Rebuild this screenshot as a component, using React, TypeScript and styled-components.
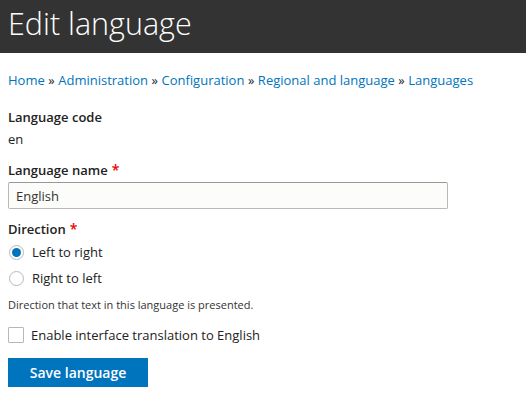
import React from "react";
import styled, { createGlobalStyle } from "styled-components";

const Global = createGlobalStyle`
  html, body { margin: 0; padding: 0; background: #fff; }
  body { font-family: "Open Sans", "Noto Sans", sans-serif; color: #222; font-size: 13px; }
`;

const Header = styled.header`
  background: #333;
  height: 53px;
  padding: 0 8px;
  display: flex;
  align-items: center;
`;

const Title = styled.h1`
  margin: 0;
  font-family: "Open Sans", sans-serif;
  font-weight: 300;
  font-size: 30.5px;
  line-height: 1;
  color: #fff;
  margin-top: -6px;
`;

const Main = styled.main`
  padding: 17px 8px 0;
  display: flex;
  flex-direction: column;
`;

const Breadcrumb = styled.nav`
  font-size: 13px;
  line-height: 20px;
  color: #222;
  margin-bottom: 17px;
`;

const Crumb = styled.a`
  color: #0074bd;
  text-decoration: none;
`;

const Sep = styled.span`
  color: #222;
  margin: 0 3.5px;
`;

const Item = styled.div<{ $mb?: number }>`
  display: flex;
  flex-direction: column;
  margin-bottom: ${(p) => p.$mb ?? 10}px;
`;

const Label = styled.label`
  font-weight: 600;
  font-size: 13px;
  line-height: 20px;
  color: #222;
`;

const Req = styled.span`
  color: #e00;
  margin-left: 4px;
  font-weight: 600;
  font-size: 14px;
`;

const Value = styled.div`
  font-size: 13px;
  line-height: 20px;
  margin-top: 2px;
`;

const Input = styled.input`
  box-sizing: border-box;
  width: 440px;
  height: 27px;
  margin-top: 2px;
  padding: 2px 7px;
  font-family: "Open Sans", sans-serif;
  font-size: 13px;
  color: #333;
  background: #fcfcfa;
  border: 1px solid #b8b8b8;
  border-top-color: #999;
  border-radius: 2px;
  outline: none;
`;

const Option = styled.label<{ $gap?: number }>`
  display: flex;
  align-items: center;
  gap: ${(p) => p.$gap ?? 8}px;
  height: 26px;
  font-size: 13px;
  color: #222;
`;

const Radio = styled.span<{ $checked?: boolean }>`
  box-sizing: border-box;
  width: 15px;
  height: 15px;
  border-radius: 50%;
  border: 1px solid #b8b8b8;
  background: #fff;
  margin-left: 1px;
  display: flex;
  align-items: center;
  justify-content: center;
  &::after {
    content: "";
    display: ${(p) => (p.$checked ? "block" : "none")};
    width: 9px;
    height: 9px;
    border-radius: 50%;
    background: #0074bd;
  }
`;

const Box = styled.span`
  box-sizing: border-box;
  width: 16px;
  height: 16px;
  border: 1px solid #b8b8b8;
  background: #fff;
  border-radius: 1px;
`;

const Desc = styled.div`
  font-size: 11px;
  line-height: 17px;
  color: #333;
  margin-top: 5px;
`;

const Button = styled.button`
  align-self: flex-start;
  box-sizing: border-box;
  width: 140px;
  height: 29px;
  margin-top: 10px;
  border: none;
  border-radius: 0;
  background: #0074bd;
  color: #fff;
  font-family: "Open Sans", sans-serif;
  font-size: 14px;
  font-weight: 600;
`;

export default function App() {
  return (
    <>
      <Global />
      <Header>
        <Title>Edit language</Title>
      </Header>
      <Main>
        <Breadcrumb>
          <Crumb href="#">Home</Crumb>
          <Sep>»</Sep>
          <Crumb href="#">Administration</Crumb>
          <Sep>»</Sep>
          <Crumb href="#">Configuration</Crumb>
          <Sep>»</Sep>
          <Crumb href="#">Regional and language</Crumb>
          <Sep>»</Sep>
          <Crumb href="#">Languages</Crumb>
        </Breadcrumb>
        <Item $mb={11}>
          <Label>Language code</Label>
          <Value>en</Value>
        </Item>
        <Item $mb={10}>
          <Label>
            Language name<Req>*</Req>
          </Label>
          <Input defaultValue="English" />
        </Item>
        <Item $mb={9}>
          <Label>
            Direction<Req>*</Req>
          </Label>
          <Option>
            <Radio $checked />
            Left to right
          </Option>
          <Option>
            <Radio />
            Right to left
          </Option>
          <Desc>Direction that text in this language is presented.</Desc>
        </Item>
        <Option $gap={7}>
          <Box />
          Enable interface translation to English
        </Option>
        <Button>Save language</Button>
      </Main>
    </>
  );
}
